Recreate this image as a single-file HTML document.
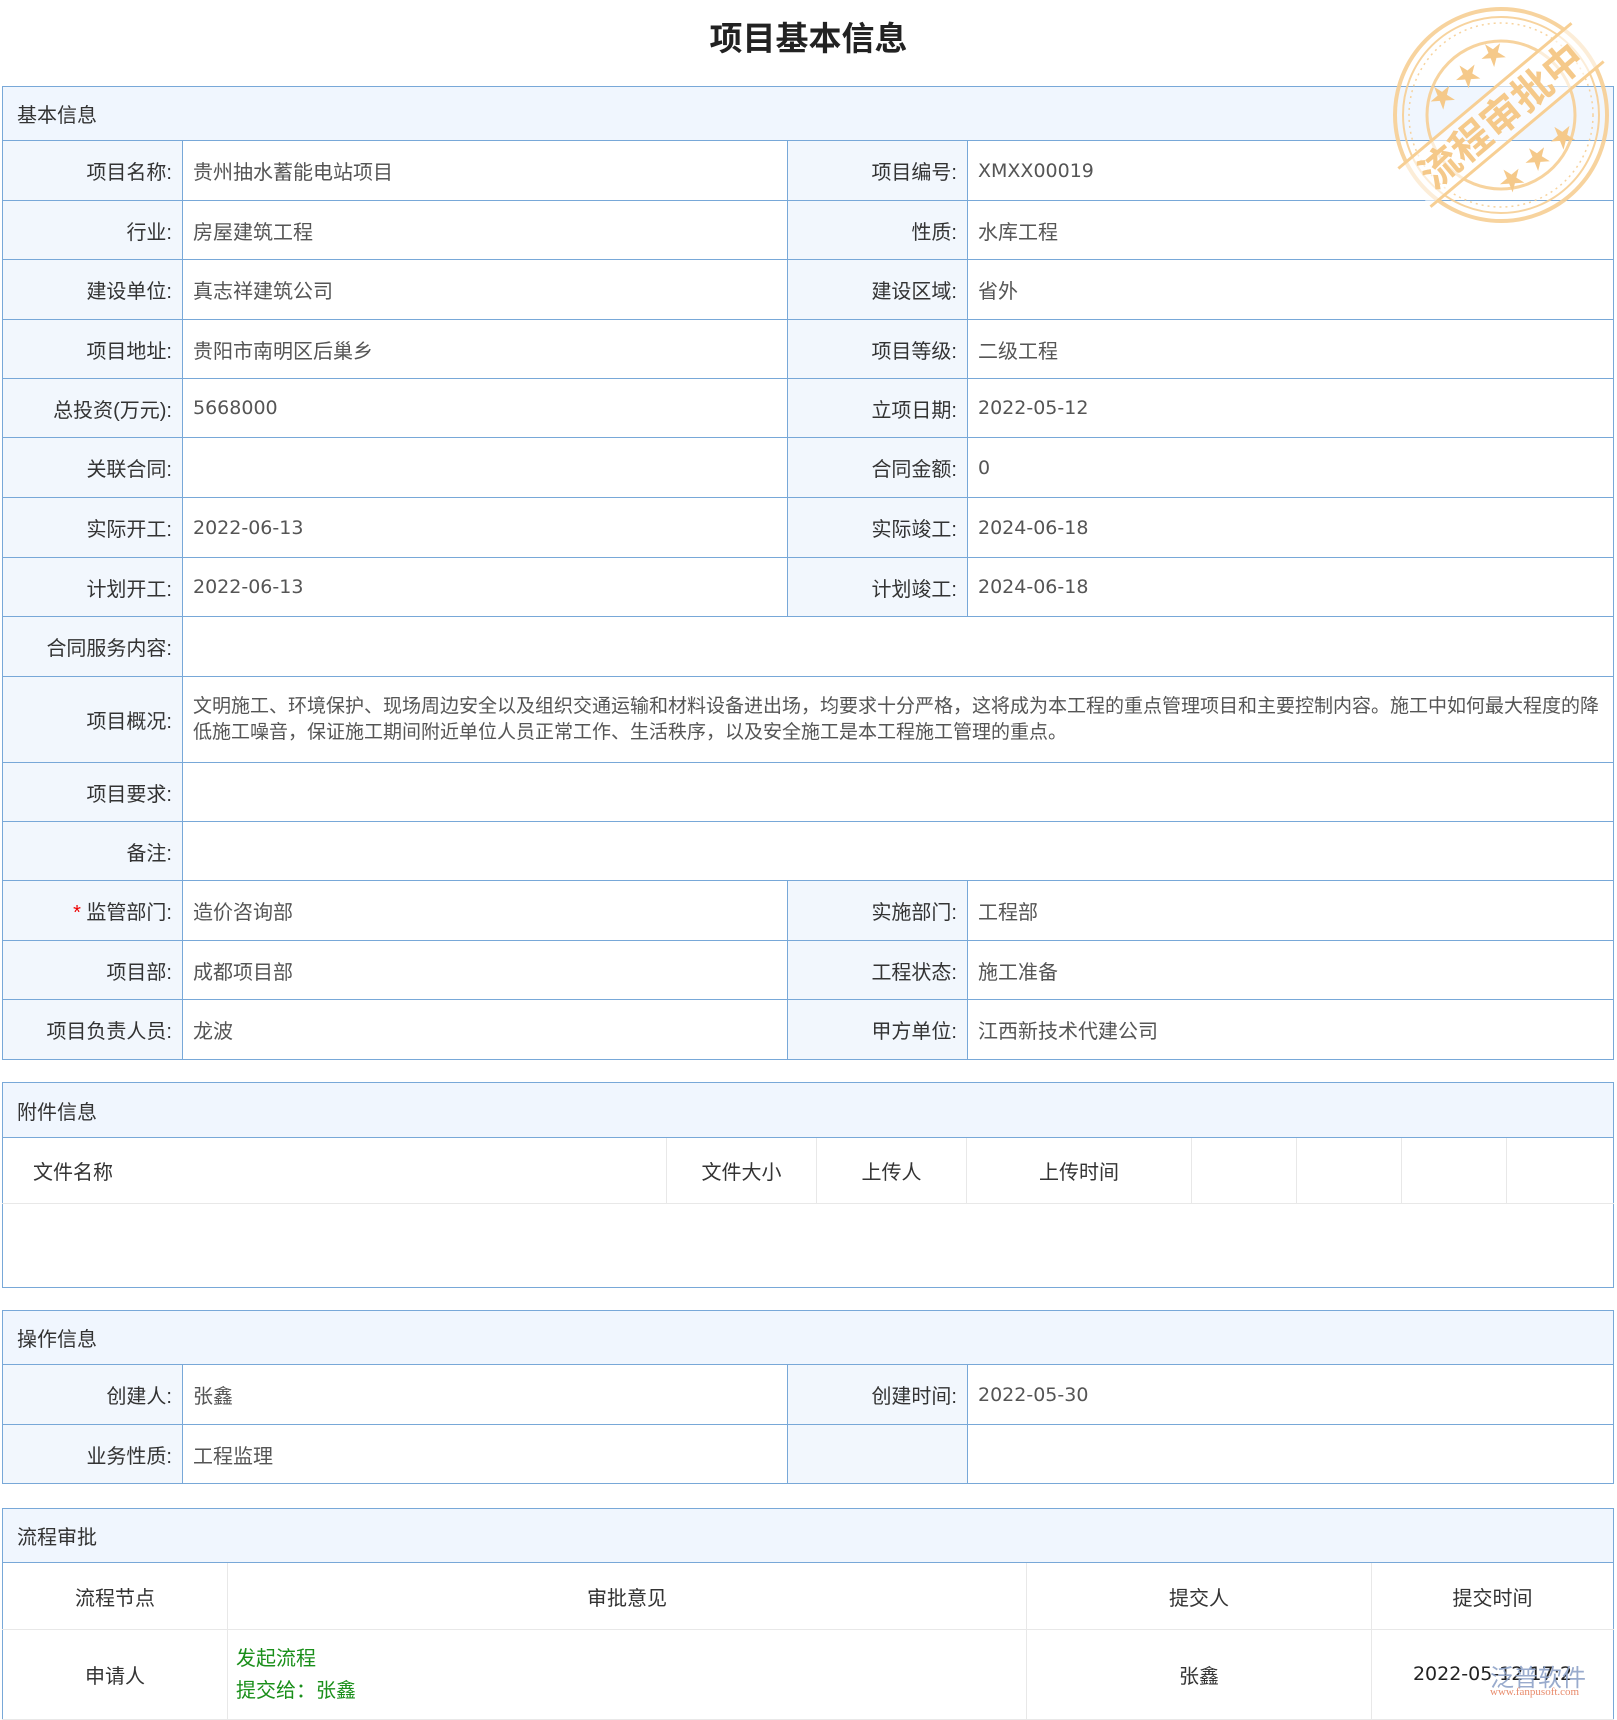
<!DOCTYPE html>
<html><head><meta charset="utf-8"><style>
*{margin:0;padding:0;box-sizing:border-box}
body{width:1617px;height:1706px;background:#fff;position:relative;overflow:hidden;font-family:"Liberation Sans","Noto Sans CJK SC",sans-serif;font-size:20px;color:#333}
h1{position:absolute;top:16px;left:0;width:1617px;text-align:center;font-size:33px;font-weight:bold;color:#222;line-height:46px}
table{position:absolute;left:2px;width:1611px;border-collapse:collapse;table-layout:fixed}
td{border:1px solid #78a8d8;padding:0 10px;vertical-align:middle}
.hd td{background:#f0f6fe;padding-left:14px;color:#333}
td.l{background:#f2f7fd;text-align:right;padding-right:10px;color:#333}
td.v{color:#555}
.n{font-family:"DejaVu Sans",sans-serif;font-size:19px;color:#444}
.att td{border-left:none;border-right:none}
.att .g td{border:1px solid #e8e8e8;text-align:center;color:#333}
.att .g td:first-child{text-align:left;padding-left:30px;border-left:1px solid #78a8d8}
.att .g td:last-child{border-right:1px solid #78a8d8}
.wf .g td{border:1px solid #e8e8e8;text-align:center;color:#333}
.wf .g td:first-child{border-left:1px solid #78a8d8}
.wf .g td:last-child{border-right:1px solid #78a8d8}
.green{color:#1a8f1a;line-height:32px}
.star{color:#e00}
</style></head><body>
<h1>项目基本信息</h1>

<table style="top:86px">
<colgroup><col style="width:180px"><col style="width:605px"><col style="width:180px"><col style="width:646px"></colgroup>
<tr class="hd" style="height:54px"><td colspan="4">基本信息</td></tr>
<tr style="height:60px"><td class="l">项目名称:</td><td class="v">贵州抽水蓄能电站项目</td><td class="l">项目编号:</td><td class="v n">XMXX00019</td></tr>
<tr style="height:59px"><td class="l">行业:</td><td class="v">房屋建筑工程</td><td class="l">性质:</td><td class="v">水库工程</td></tr>
<tr style="height:60px"><td class="l">建设单位:</td><td class="v">真志祥建筑公司</td><td class="l">建设区域:</td><td class="v">省外</td></tr>
<tr style="height:59px"><td class="l">项目地址:</td><td class="v">贵阳市南明区后巢乡</td><td class="l">项目等级:</td><td class="v">二级工程</td></tr>
<tr style="height:59px"><td class="l">总投资(万元):</td><td class="v n">5668000</td><td class="l">立项日期:</td><td class="v n">2022-05-12</td></tr>
<tr style="height:60px"><td class="l">关联合同:</td><td class="v"></td><td class="l">合同金额:</td><td class="v n">0</td></tr>
<tr style="height:60px"><td class="l">实际开工:</td><td class="v n">2022-06-13</td><td class="l">实际竣工:</td><td class="v n">2024-06-18</td></tr>
<tr style="height:59px"><td class="l">计划开工:</td><td class="v n">2022-06-13</td><td class="l">计划竣工:</td><td class="v n">2024-06-18</td></tr>
<tr style="height:60px"><td class="l">合同服务内容:</td><td class="v" colspan="3"></td></tr>
<tr style="height:86px"><td class="l">项目概况:</td><td class="v" colspan="3" style="line-height:26px;font-size:19px">文明施工、环境保护、现场周边安全以及组织交通运输和材料设备进出场，均要求十分严格，这将成为本工程的重点管理项目和主要控制内容。施工中如何最大程度的降低施工噪音，保证施工期间附近单位人员正常工作、生活秩序，以及安全施工是本工程施工管理的重点。</td></tr>
<tr style="height:59px"><td class="l">项目要求:</td><td class="v" colspan="3"></td></tr>
<tr style="height:59px"><td class="l">备注:</td><td class="v" colspan="3"></td></tr>
<tr style="height:60px"><td class="l"><span class="star">*</span> 监管部门:</td><td class="v">造价咨询部</td><td class="l">实施部门:</td><td class="v">工程部</td></tr>
<tr style="height:59px"><td class="l">项目部:</td><td class="v">成都项目部</td><td class="l">工程状态:</td><td class="v">施工准备</td></tr>
<tr style="height:60px"><td class="l">项目负责人员:</td><td class="v">龙波</td><td class="l">甲方单位:</td><td class="v">江西新技术代建公司</td></tr>
</table>

<table class="att" style="top:1082px">
<colgroup><col style="width:664px"><col style="width:150px"><col style="width:150px"><col style="width:225px"><col style="width:105px"><col style="width:105px"><col style="width:105px"><col style="width:107px"></colgroup>
<tr class="hd" style="height:55px"><td colspan="8" style="border:1px solid #78a8d8">附件信息</td></tr>
<tr class="g" style="height:66px"><td>文件名称</td><td>文件大小</td><td>上传人</td><td>上传时间</td><td></td><td></td><td></td><td></td></tr>
<tr style="height:84px"><td colspan="8" style="border:1px solid #78a8d8;border-top:1px solid #e8e8e8"></td></tr>
</table>

<table style="top:1310px">
<colgroup><col style="width:180px"><col style="width:605px"><col style="width:180px"><col style="width:646px"></colgroup>
<tr class="hd" style="height:54px"><td colspan="4">操作信息</td></tr>
<tr style="height:60px"><td class="l">创建人:</td><td class="v">张鑫</td><td class="l">创建时间:</td><td class="v n">2022-05-30</td></tr>
<tr style="height:59px"><td class="l">业务性质:</td><td class="v">工程监理</td><td class="l"></td><td class="v"></td></tr>
</table>

<table class="wf" style="top:1508px">
<colgroup><col style="width:225px"><col style="width:799px"><col style="width:345px"><col style="width:242px"></colgroup>
<tr class="hd" style="height:54px"><td colspan="4">流程审批</td></tr>
<tr class="g" style="height:67px"><td>流程节点</td><td>审批意见</td><td>提交人</td><td>提交时间</td></tr>
<tr class="g" style="height:90px"><td>申请人</td><td style="text-align:left;padding-left:8px"><div class="green">发起流程</div><div class="green">提交给：张鑫</div></td><td>张鑫</td><td><span style="font-family:'DejaVu Sans',sans-serif;font-size:19px;color:#222">2022-05-12 17:2</span></td></tr>
</table>

<svg style="position:absolute;left:1388px;top:2px" width="226" height="226" viewBox="0 0 226 226">
<g fill="none" stroke="#f7cf94" opacity="0.9">
<circle cx="113" cy="113" r="106" stroke-width="4"/>
<circle cx="113" cy="113" r="98" stroke-width="2"/>
<circle cx="113" cy="113" r="92" stroke-width="1.5" stroke-dasharray="2 4"/>
<circle cx="113" cy="113" r="74" stroke-width="3"/>
</g>
<g transform="rotate(-40 113 113)">
<rect x="0" y="88" width="226" height="50" fill="#fff" fill-opacity="0.6"/>
<line x1="0" y1="88" x2="226" y2="88" stroke="#f7cf94" stroke-width="3"/>
<line x1="0" y1="138" x2="226" y2="138" stroke="#f7cf94" stroke-width="3"/>
<text x="113" y="128" text-anchor="middle" font-size="40" font-weight="bold" fill="#f5c98a" font-family="Noto Sans CJK SC,sans-serif">流程审批中</text>
<text x="113" y="70" text-anchor="middle" font-size="26" fill="#f5c98a">★ ★ ★</text>
<text x="113" y="178" text-anchor="middle" font-size="26" fill="#f5c98a">★ ★ ★</text>
</g>
</svg>

<div style="position:absolute;left:1490px;top:1658px;font-size:24px;color:#8ea3c8;opacity:.9">泛普软件</div>
<div style="position:absolute;left:1490px;top:1686px;font-size:11px;color:#e88a6a;font-family:'Liberation Serif',serif">www.fanpusoft.com</div>
</body></html>
